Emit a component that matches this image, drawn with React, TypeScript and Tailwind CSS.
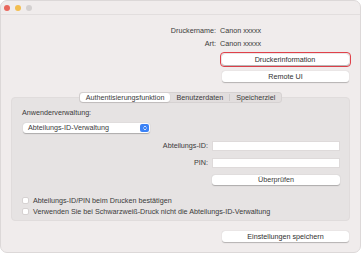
import { ChevronsUpDown } from "lucide-react"

function Btn({ label, focus }: { label: string; focus?: boolean }) {
  return (
    <div className={focus ? "rounded-[4px] border-[1.5px] border-[#e0414a] p-[1px] -m-[2.5px]" : ""}>
      <div className="h-[11px] w-[127px] rounded-[3px] bg-white shadow-[0_0.5px_1px_rgba(0,0,0,0.25)] flex items-center justify-center text-[#2e2e2e]">
        {label}
      </div>
    </div>
  )
}

function Field() {
  return <div className="h-[10px] w-[128px] bg-white border border-[#dedada]" />
}

function Check({ label }: { label: string }) {
  return (
    <div className="flex items-center gap-[4px] h-[11px]">
      <div className="w-[7px] h-[7px] rounded-[2px] bg-white border border-[#d6d2d2]" />
      <span>{label}</span>
    </div>
  )
}

export default function App() {
  return (
    <div className="w-[361px] h-[253px] bg-white">
      <div
        className="w-full h-full rounded-[7px] bg-[#f0ecec] border border-[#dcd8d8] overflow-hidden text-[7.2px] leading-none text-[#3a3a3a]"
        style={{ fontFamily: '"Liberation Sans", Arial, sans-serif' }}
      >
        <div className="h-[14px] flex items-center gap-[5px] pl-[3px] border-b border-[#e2dede]">
          <div className="w-[6px] h-[6px] rounded-full bg-[#e8675d]" />
          <div className="w-[6px] h-[6px] rounded-full bg-[#f2bd4f]" />
          <div className="w-[6px] h-[6px] rounded-full bg-[#d3d0d0]" />
        </div>

        <div className="grid grid-cols-[215px_1fr] gap-x-[4px] gap-y-[6px] pt-[12px]">
          <span className="text-right">Druckername:</span>
          <span>Canon xxxxx</span>
          <span className="text-right">Art:</span>
          <span>Canon xxxxx</span>
        </div>

        <div className="flex flex-col items-start gap-[7px] pl-[221px] pt-[7px]">
          <Btn label="Druckerinformation" focus />
          <Btn label="Remote UI" />
        </div>

        <div className="flex justify-center mt-[10px] relative z-10 -mb-[6px]">
          <div className="flex h-[11px] rounded-[3px] bg-[#e2dede] border border-[#d6d2d2] items-center">
            <div className="h-full px-[6px] flex items-center bg-white rounded-[3px] shadow-[0_0.5px_1px_rgba(0,0,0,0.2)]">
              Authentisierungsfunktion
            </div>
            <div className="px-[6px] border-r border-[#cfcbcb] h-[7px] flex items-center">Benutzerdaten</div>
            <div className="px-[6px]">Speicherziel</div>
          </div>
        </div>

        <div className="mx-[10px] h-[124px] rounded-[4px] bg-[#e6e3e3] border border-[#e0dcdc] pt-[11px] px-[10px]">
          <div>Anwenderverwaltung:</div>
          <div className="mt-[6px] ml-[1px] w-[127px] h-[10px] rounded-[3px] bg-white shadow-[0_0.5px_1px_rgba(0,0,0,0.25)] flex items-center justify-between pl-[5px] pr-[1px]">
            <span>Abteilungs-ID-Verwaltung</span>
            <div className="w-[9px] h-[8px] rounded-[2px] bg-[#3b82f6] flex items-center justify-center">
              <ChevronsUpDown className="w-[6px] h-[6px] text-white" strokeWidth={3} />
            </div>
          </div>

          <div className="grid grid-cols-[186px_auto] gap-x-[4px] gap-y-[7px] items-center mt-[8px]">
            <span className="text-right">Abteilungs-ID:</span>
            <Field />
            <span className="text-right">PIN:</span>
            <Field />
            <span />
            <div className="h-[10px] w-[128px] rounded-[3px] bg-white shadow-[0_0.5px_1px_rgba(0,0,0,0.25)] flex items-center justify-center">
              Überprüfen
            </div>
          </div>

          <div className="mt-[10px] flex flex-col">
            <Check label="Abteilungs-ID/PIN beim Drucken bestätigen" />
            <Check label="Verwenden Sie bei Schwarzweiß-Druck nicht die Abteilungs-ID-Verwaltung" />
          </div>
        </div>

        <div className="pl-[221px] pt-[10px]">
          <Btn label="Einstellungen speichern" />
        </div>
      </div>
    </div>
  )
}
